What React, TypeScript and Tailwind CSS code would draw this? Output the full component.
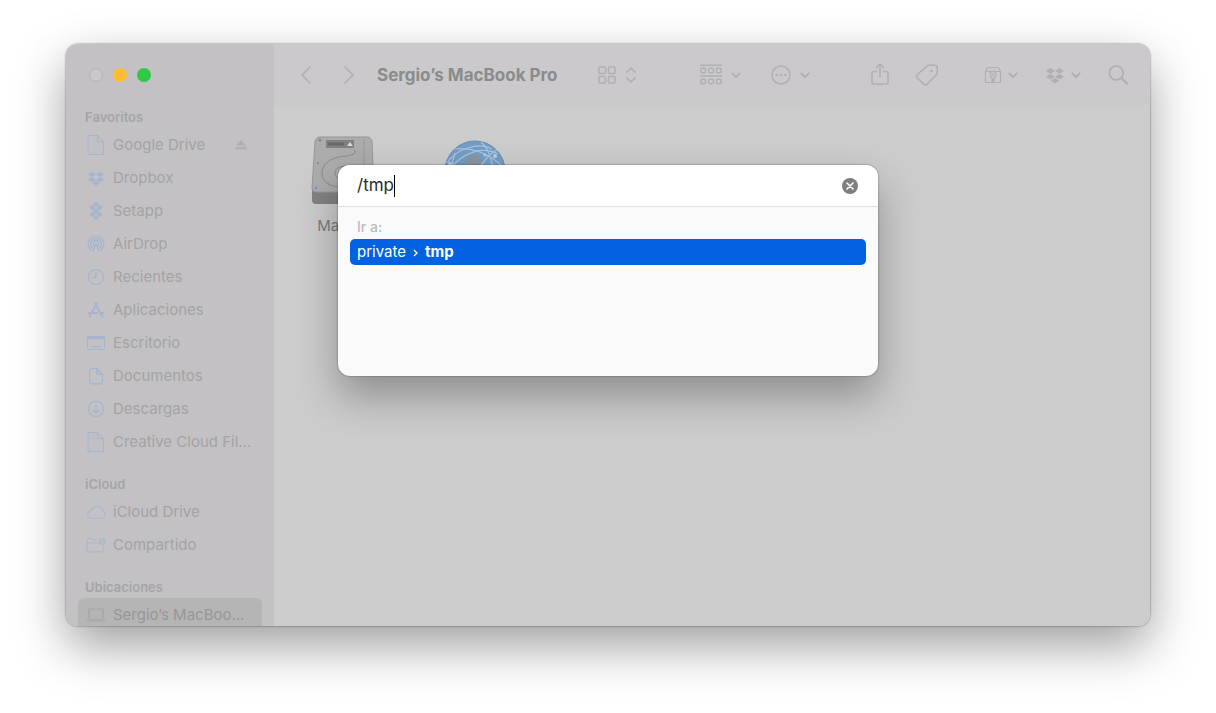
import { useState } from "react"
import type { ReactNode } from "react"

interface IconProps {
    children: ReactNode
    className?: string
    size?: number
}

function Icon({ children, className = "", size = 20 }: IconProps) {
    return (
        <svg
            width={size}
            height={size}
            viewBox={`0 0 ${size} ${size}`}
            fill="none"
            stroke="currentColor"
            strokeWidth="1.2"
            strokeLinecap="round"
            strokeLinejoin="round"
            aria-hidden="true"
            className={`shrink-0 ${className}`}
        >
            {children}
        </svg>
    )
}

const DROPBOX_PATH =
    "M5.5 3L1 5.9l4.5 2.9L10 5.9zM14.5 3L10 5.9l4.5 2.9L19 5.9zM5.5 8.8L1 11.7l4.5 2.9 4.5-2.9zM14.5 8.8L10 11.7l4.5 2.9 4.5-2.9zM10 12.9l-4.3 2.8L10 18.5l4.3-2.8z"

function FileIcon() {
    return (
        <Icon>
            <path d="M2.5 .5h9l6 6v13h-15z" strokeWidth="1" fill="currentColor" fillOpacity="0.12" />
            <path d="M11.5 .5v6h6" strokeWidth="1" />
        </Icon>
    )
}

function DropboxIcon({ className }: { className?: string }) {
    return (
        <Icon className={className}>
            <path d={DROPBOX_PATH} fill="currentColor" stroke="none" />
        </Icon>
    )
}

function SetappIcon() {
    return (
        <Icon>
            <g fill="currentColor" stroke="none">
                <path d="M10 .5l2.7 2.7L10 5.9 7.3 3.2zM6.6 3.8l2.8 2.8-2.800 2.800-2.800-2.800zM13.400 3.800l2.800 2.800-2.800 2.800-2.800-2.800zM10 7.200l2.800 2.800L10 12.800 7.200 10z" />
                <path d="M6.600 10.600l2.800 2.800-2.800 2.800-2.800-2.800zM13.400 10.600l2.800 2.800-2.800 2.800-2.800-2.800zM10 14.100l2.700 2.700L10 19.500l-2.700-2.700z" />
            </g>
        </Icon>
    )
}

function AirDropIcon() {
    return (
        <Icon>
            <path d="M5.200 16.400a8 8 0 1 1 9.600 0M6.700 14.200a5.500 5.500 0 1 1 6.600 0M8.200 12a3 3 0 1 1 3.600 0" />
            <path d="M10 10l-3 7.500M10 10l3 7.500" />
        </Icon>
    )
}

function ClockIcon() {
    return (
        <Icon>
            <circle cx="10" cy="10" r="7.500" />
            <path d="M10 5v5.500H6" />
        </Icon>
    )
}

function AppsIcon() {
    return (
        <Icon>
            <path d="M9 3l6.500 12.500M11 3L5 14M2.500 13h8.500M14.500 13h3M4.300 15.500l-.8 1.400M15.500 15.500l1 1.400" strokeWidth="1.800" />
        </Icon>
    )
}

function DesktopIcon() {
    return (
        <Icon>
            <rect x="1.500" y="3.500" width="17" height="13" rx="1.500" />
            <path d="M2 5h16" strokeWidth="2" />
            <path d="M5 13.800h10" strokeWidth="2" strokeDasharray="2 .7" strokeLinecap="butt" />
        </Icon>
    )
}

function DocumentIcon() {
    return (
        <Icon>
            <path d="M5.500 2.500h5l6 6v7.500a1.800 1.800 0 0 1-1.800 1.800H5.500A1.800 1.800 0 0 1 3.700 16V4.300a1.800 1.800 0 0 1 1.800-1.800z" />
            <path d="M10.500 2.800v4.200a1.300 1.300 0 0 0 1.300 1.300h4.400" />
        </Icon>
    )
}

function DownloadIcon() {
    return (
        <Icon>
            <circle cx="10" cy="10" r="7.500" />
            <path d="M10 6v8M7.300 11.300L10 14l2.700-2.700" />
        </Icon>
    )
}

function CloudIcon() {
    return (
        <Icon className="opacity-70">
            <path d="M5 16.500a3.800 3.800 0 0 1-.6-7.400 2.700 2.700 0 0 1 2.700-2.400 4.800 4.800 0 0 1 9 1.900 4 4 0 0 1-.6 7.900z" />
        </Icon>
    )
}

function SharedFolderIcon() {
    return (
        <Icon className="opacity-70">
            <path d="M17.500 11v4a1.800 1.800 0 0 1-1.800 1.800H2.800A1.800 1.800 0 0 1 1 15V5a1.500 1.500 0 0 1 1.500-1.500h3.300L7.500 5H12M1 8h11.500" />
            <circle cx="16.300" cy="6.300" r="3.600" fill="currentColor" stroke="none" />
            <circle cx="16.300" cy="5.200" r="1" fill="#c3c1c4" stroke="none" />
            <path d="M14.500 8.200a2 2 0 0 1 3.600 0z" fill="#c3c1c4" stroke="none" />
        </Icon>
    )
}

function LaptopIcon() {
    return (
        <Icon>
            <rect x="3" y="4" width="14" height="10.500" rx="1" />
            <path d="M.7 16h18.600" />
        </Icon>
    )
}

function ChevronDown() {
    return (
        <Icon size={10}>
            <path d="M1.300 3.300L5 7l3.700-3.700" strokeWidth="1.800" />
        </Icon>
    )
}

interface SidebarItem {
    label: string
    icon: ReactNode
    ejectable?: boolean
    selected?: boolean
}

const SECTIONS: { title: string; items: SidebarItem[] }[] = [
    {
        title: "Favoritos",
        items: [
            { label: "Google Drive", icon: <FileIcon />, ejectable: true },
            { label: "Dropbox", icon: <DropboxIcon className="p-px" /> },
            { label: "Setapp", icon: <SetappIcon /> },
            { label: "AirDrop", icon: <AirDropIcon /> },
            { label: "Recientes", icon: <ClockIcon /> },
            { label: "Aplicaciones", icon: <AppsIcon /> },
            { label: "Escritorio", icon: <DesktopIcon /> },
            { label: "Documentos", icon: <DocumentIcon /> },
            { label: "Descargas", icon: <DownloadIcon /> },
            { label: "Creative Cloud Fil...", icon: <FileIcon /> },
        ],
    },
    {
        title: "iCloud",
        items: [
            { label: "iCloud Drive", icon: <CloudIcon /> },
            { label: "Compartido", icon: <SharedFolderIcon /> },
        ],
    },
    {
        title: "Ubicaciones",
        items: [{ label: "Sergio’s MacBoo...", icon: <LaptopIcon />, selected: true }],
    },
]

function SidebarRow({ label, icon, ejectable, selected }: SidebarItem) {
    return (
        <li className={`flex h-[33px] items-center rounded-md px-2 ${selected ? "bg-[#b6b5b6]" : ""}`}>
            <a href="#" className="flex min-w-0 flex-1 items-center gap-[7px]">
                <span className={`flex ${selected ? "text-[#a5a4a6]" : "text-[#a3b5cf]"}`}>{icon}</span>
                <span className={`truncate pt-px ${selected ? "text-[#969597]" : "text-[#a4a3a5]"}`}>{label}</span>
            </a>
            {ejectable && (
                <button type="button" aria-label={`Expulsar ${label}`} className="mr-1.5 text-[#b0afb1]">
                    <Icon size={14}>
                        <path d="M7 2l5 5.500H2zM1.500 9h11v2.500h-11z" fill="currentColor" stroke="none" />
                    </Icon>
                </button>
            )}
        </li>
    )
}

function Sidebar() {
    return (
        <aside className="w-[208px] shrink-0 bg-[#c3c1c4] px-3 text-[15px]">
            <div className="flex h-[62px] items-center gap-2.5 pl-[11px]">
                <button type="button" aria-label="Cerrar" className="size-3.5 rounded-full border border-[#b4b2b5] bg-[#c9c7ca]" />
                <button type="button" aria-label="Minimizar" className="size-3.5 rounded-full bg-[#fdbc33]" />
                <button type="button" aria-label="Ampliar" className="size-3.5 rounded-full bg-[#2fc944]" />
            </div>
            <nav className="flex flex-col gap-[15px]">
                {SECTIONS.map((section) => (
                    <section key={section.title}>
                        <h2 className="h-[22px] pl-[7px] text-[13px] leading-[22px] font-semibold text-[#a5a4a6]">{section.title}</h2>
                        <ul>
                            {section.items.map((item) => (
                                <SidebarRow key={item.label} {...item} />
                            ))}
                        </ul>
                    </section>
                ))}
            </nav>
        </aside>
    )
}

function Toolbar() {
    return (
        <header className="flex h-[62px] shrink-0 items-center bg-[#cbc9cc] px-[22px] text-[#b0afb1]">
            <button type="button" aria-label="Atrás">
                <Icon>
                    <path d="M14 2L6 10l8 8" strokeWidth="1.600" />
                </Icon>
            </button>
            <button type="button" aria-label="Adelante" className="ml-[23px]">
                <Icon>
                    <path d="M6 2l8 8-8 8" strokeWidth="1.600" />
                </Icon>
            </button>
            <h1 className="ml-[18px] w-[220px] truncate pt-px text-[17px] font-bold text-[#8a8c8b]">Sergio’s MacBook Pro</h1>

            <button type="button" aria-label="Visualización" className="flex items-center gap-2">
                <Icon>
                    <g strokeWidth="1.500">
                        <rect x="2" y="2" width="6.500" height="6.500" rx="1" />
                        <rect x="11.500" y="2" width="6.500" height="6.500" rx="1" />
                        <rect x="2" y="11.500" width="6.500" height="6.500" rx="1" />
                        <rect x="11.500" y="11.500" width="6.500" height="6.500" rx="1" />
                    </g>
                </Icon>
                <svg width="12" height="20" viewBox="0 0 12 20" fill="none" stroke="currentColor" strokeWidth="1.700" strokeLinecap="round" strokeLinejoin="round" aria-hidden="true">
                    <path d="M2 7l4-4 4 4M2 13l4 4 4-4" />
                </svg>
            </button>

            <div className="ml-auto flex items-center">
                <button type="button" aria-label="Agrupar" className="flex items-center gap-[9px]">
                    <Icon size={22}>
                        <g strokeWidth="1.500">
                            <path d="M.8 1.200h20.400M.8 12h20.400" />
                            <rect x="1" y="4.200" width="4.500" height="4.500" rx="1" />
                            <rect x="8.800" y="4.200" width="4.500" height="4.500" rx="1" />
                            <rect x="16.500" y="4.200" width="4.500" height="4.500" rx="1" />
                            <rect x="1" y="15.200" width="4.500" height="4.500" rx="1" />
                            <rect x="8.800" y="15.200" width="4.500" height="4.500" rx="1" />
                            <rect x="16.500" y="15.200" width="4.500" height="4.500" rx="1" />
                        </g>
                    </Icon>
                    <ChevronDown />
                </button>
                <button type="button" aria-label="Acciones" className="ml-[30px] flex items-center gap-[9px]">
                    <Icon>
                        <circle cx="10" cy="10" r="9" strokeWidth="1.500" />
                        <g fill="currentColor" stroke="none">
                            <circle cx="5.600" cy="10" r="1.300" />
                            <circle cx="10" cy="10" r="1.300" />
                            <circle cx="14.400" cy="10" r="1.300" />
                        </g>
                    </Icon>
                    <ChevronDown />
                </button>
                <button type="button" aria-label="Compartir" className="ml-[60px]">
                    <Icon size={24} className="-mx-0.5">
                        <path d="M8.500 8.500H6a2 2 0 0 0-2 2V19a2 2 0 0 0 2 2h12a2 2 0 0 0 2-2v-8.500a2 2 0 0 0-2-2h-2.500M12 13.500V1M8.300 4.500L12 1l3.700 3.500" strokeWidth="1.500" />
                    </Icon>
                </button>
                <button type="button" aria-label="Etiquetas" className="ml-[25px]">
                    <Icon size={24}>
                        <path d="M14 2.200h5.500A2.800 2.800 0 0 1 22.300 5v4.500a3 3 0 0 1-.9 2.100l-9.600 9.800a2 2 0 0 1-2.900 0l-6.800-6.700a2 2 0 0 1 0-2.900l9.800-8.700a3 3 0 0 1 2.100-.9z" strokeWidth="1.500" />
                        <circle cx="16.500" cy="8" r="1.300" fill="currentColor" stroke="none" />
                    </Icon>
                </button>
                <button type="button" aria-label="Comprimir" className="ml-11 flex items-center gap-[5px]">
                    <Icon>
                        <path d="M2.500 6.500h15v11h-15zM2.500 6.500l1.500-3q.5-1 1.500-1h9q1 0 1.500 1l1.500 3" />
                        <path d="M7.500 6.500h5v5.500l-1.500 1v3.500H9V13l-1.500-1zM10 9v2M10 14v2" strokeWidth="1.300" />
                    </Icon>
                    <ChevronDown />
                </button>
                <button type="button" aria-label="Dropbox" className="ml-[27px] flex items-center gap-1.5">
                    <DropboxIcon />
                    <ChevronDown />
                </button>
                <button type="button" aria-label="Buscar" className="ml-[27px]">
                    <Icon>
                        <circle cx="8.300" cy="8" r="7" strokeWidth="1.700" />
                        <path d="M13.600 13.300l5.200 5.200" strokeWidth="2.200" />
                    </Icon>
                </button>
            </div>
        </header>
    )
}

function HardDriveIcon() {
    return (
        <svg width="64" height="72" viewBox="0 0 64 72" aria-hidden="true">
            <path d="M1 54h62v10a4 4 0 0 1-4 4H5a4 4 0 0 1-4-4z" fill="#828282" />
            <path d="M9 1h47a5 5 0 0 1 5 5l2 46a4 4 0 0 1-4 4H5a4 4 0 0 1-4-4L4 6a5 5 0 0 1 5-5z" fill="#acacac" stroke="#979797" />
            <path d="M53 3v52" stroke="#999" />
            <rect x="15" y="4" width="28" height="8" rx="1" fill="#808080" />
            <path d="M17 8h16" stroke="#686868" strokeWidth="3" />
            <path d="M36 10l3-4 3 4z" fill="#ddd" />
            <path d="M43 14c3 2 0 5-7 6-16 1-25 7-25 18 0 7 7 12 16 13h12M38 30c-9 0-14 2-14 7s6 7 14 7" fill="none" stroke="#8a8a8a" />
            <circle cx="9" cy="4" r="1.500" fill="#858585" />
            <circle cx="7" cy="27" r="1" fill="#858585" />
            <circle cx="5" cy="52" r="1.300" fill="#7893b5" />
            <circle cx="17" cy="47" r="1" fill="#8a9ab0" />
        </svg>
    )
}

function NetworkIcon() {
    return (
        <svg width="64" height="64" viewBox="0 0 64 64" aria-hidden="true">
            <circle cx="32" cy="31" r="30" fill="#739dc4" stroke="#6c8cab" />
            <path d="M22 22c1-6 8-9 12-7s6 7 3 12H24z" fill="#8796a2" />
            <g fill="none" stroke="#a9c3e0" strokeWidth="1.200">
                <path d="M4 23C14 8 36 2 49 9M8 27C22 12 40 6 55 14M12 9c16-2 34 4 48 18M38 2c8 6 12 20 14 40M36 28C42 20 48 12 54 10M12 13c-4 10-4 22 0 34" />
            </g>
            <g fill="#b9cde6">
                <circle cx="42" cy="15" r="1.500" />
                <circle cx="52" cy="16" r="2" />
                <circle cx="7" cy="24" r="2" />
            </g>
        </svg>
    )
}

const VOLUMES = [
    { name: "MacOS", icon: <HardDriveIcon /> },
    { name: "Red", icon: <NetworkIcon /> },
]

function GoToFolderDialog() {
    const [path, setPath] = useState("/tmp")

    return (
        <div
            role="dialog"
            aria-label="Ir a la carpeta"
            className="absolute top-[121px] left-1/2 h-[211px] w-[540px] -translate-x-1/2 overflow-hidden rounded-xl bg-[#fafafa] shadow-[0_20px_40px_rgba(0,0,0,0.3),0_0_2px_rgba(0,0,0,0.5)]"
        >
            <div className="flex h-[42px] items-center border-b border-[#e2e2e2] bg-white pr-5 pl-[19px]">
                <input
                    type="text"
                    aria-label="Ruta"
                    value={path}
                    onChange={(e) => setPath(e.target.value)}
                    className="field-sizing-content text-[17px] text-[#2b2b2b] outline-none"
                />
                <span className="h-[22px] w-px bg-black" />
                <button
                    type="button"
                    aria-label="Borrar"
                    onClick={() => setPath("")}
                    className="ml-auto flex size-4 items-center justify-center rounded-full bg-[#7f7f7f] text-white"
                >
                    <Icon size={8}>
                        <path d="M1 1l6 6M7 1L1 7" strokeWidth="1.600" />
                    </Icon>
                </button>
            </div>
            <div className="px-3 pt-2">
                <p className="px-[7px] text-sm leading-6 font-medium text-[#bcbcbc]">Ir a:</p>
                <button type="button" className="flex h-[26px] w-full items-center gap-[7px] rounded-[5px] bg-[#0262e1] px-[7px] pt-px text-[15px] text-white">
                    <span>private</span>
                    <svg width="5" height="8" viewBox="0 0 5 8" fill="none" stroke="currentColor" strokeWidth="1.300" aria-hidden="true">
                        <path d="M1 1l3 3-3 3" />
                    </svg>
                    <span className="font-bold">tmp</span>
                </button>
            </div>
        </div>
    )
}

export default function App() {
    return (
        <div className="flex h-screen bg-white px-[66px] pt-11 pb-[87px] font-[Inter,sans-serif]">
            <div className="relative flex min-w-0 flex-1 rounded-xl shadow-[0_20px_50px_rgba(0,0,0,0.38),0_0_2px_rgba(0,0,0,0.6)]">
                <div className="flex min-w-0 flex-1 overflow-hidden rounded-xl">
                    <Sidebar />
                    <div className="flex min-w-0 flex-1 flex-col bg-[#cccccc]">
                        <Toolbar />
                        <main className="flex gap-[18px] px-3 pt-7">
                            {VOLUMES.map((volume) => (
                                <figure key={volume.name} className="flex w-[114px] flex-col items-center">
                                    <div className="flex h-[76px] items-center">{volume.icon}</div>
                                    <figcaption className="mt-0.5 text-[15px] leading-7 text-[#7c7c7c]">{volume.name}</figcaption>
                                </figure>
                            ))}
                        </main>
                    </div>
                </div>
                <GoToFolderDialog />
            </div>
        </div>
    )
}
